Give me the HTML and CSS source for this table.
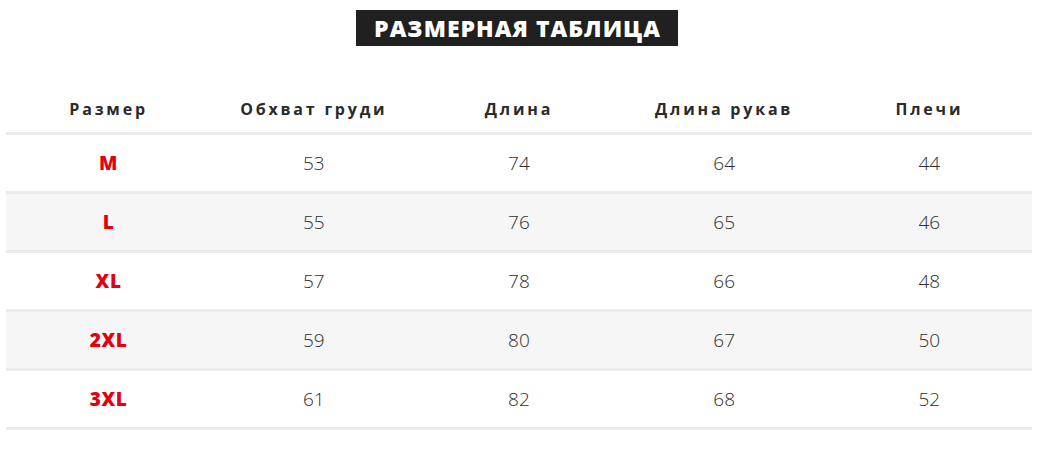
FILE: index.html
```html
<!DOCTYPE html>
<html lang="ru">
<head>
<meta charset="utf-8">
<title>Размерная таблица</title>
<link rel="stylesheet" href="styles.css">
</head>
<body>
<div class="page">
  <div class="title-wrap"><h1 class="title">РАЗМЕРНАЯ ТАБЛИЦА</h1></div>
  <table class="sizes">
    <thead>
      <tr><th>Размер</th><th>Обхват груди</th><th>Длина</th><th>Длина рукав</th><th>Плечи</th></tr>
    </thead>
    <tbody>
      <tr><td class="sz">M</td><td>53</td><td>74</td><td>64</td><td>44</td></tr>
      <tr class="alt"><td class="sz">L</td><td>55</td><td>76</td><td>65</td><td>46</td></tr>
      <tr><td class="sz">XL</td><td>57</td><td>78</td><td>66</td><td>48</td></tr>
      <tr class="alt"><td class="sz">2XL</td><td>59</td><td>80</td><td>67</td><td>50</td></tr>
      <tr><td class="sz">3XL</td><td>61</td><td>82</td><td>68</td><td>52</td></tr>
    </tbody>
  </table>
</div>
</body>
</html>
```
FILE: styles.css
```css
html, body {
  margin: 0;
  padding: 0;
  background: #ffffff;
}
.page {
  width: 1026px;
  padding: 10px 0 0 6px;
  font-family: "Open Sans", "DejaVu Sans", sans-serif;
}
.title-wrap {
  text-align: center;
  padding-right: 4px;
}
.title {
  display: inline-block;
  margin: 0;
  background: #202020;
  color: #ffffff;
  font-size: 23px;
  font-weight: 800;
  line-height: 36px;
  height: 36px;
  padding: 0 17px 0 18px;
  letter-spacing: 1px;
}
.sizes {
  width: 1026px;
  margin-top: 40px;
  border-collapse: collapse;
  table-layout: fixed;
}
.sizes th {
  height: 46px;
  padding: 0;
  font-size: 16px;
  font-weight: 700;
  letter-spacing: 2.8px;
  color: #2a2a2a;
  text-align: center;
  vertical-align: middle;
  border-bottom: 3px solid #ebebeb;
}
.sizes td {
  height: 56px;
  padding: 0;
  text-align: center;
  vertical-align: middle;
  font-size: 19px;
  font-weight: 300;
  color: #2e2e2e;
  border-bottom: 3px solid #ebebeb;
}
.sizes tr.alt td {
  background: #f6f6f6;
}
.sizes td.sz {
  color: #e3000f;
  font-weight: 800;
  font-size: 19px;
  letter-spacing: 0.6px;
}
```
